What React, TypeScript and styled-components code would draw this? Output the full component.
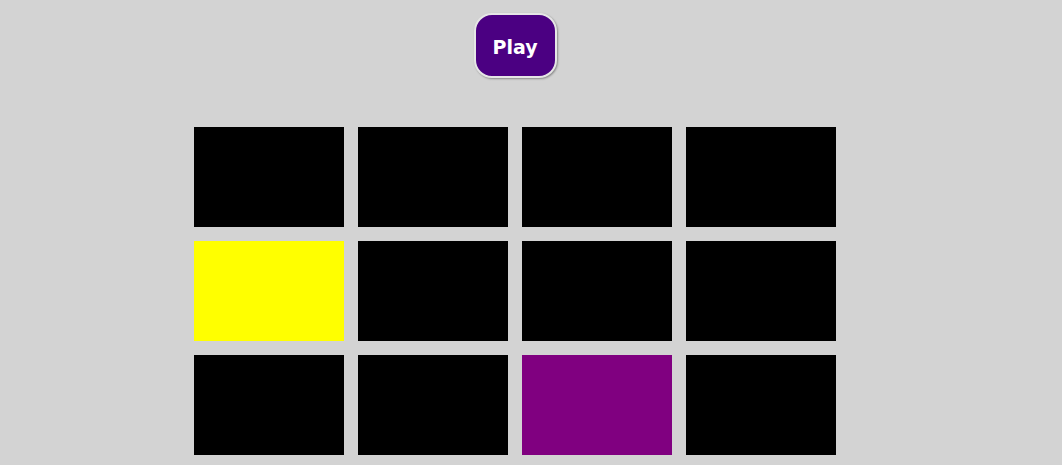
import React from "react";
import styled, { createGlobalStyle } from "styled-components";

const Global = createGlobalStyle`
  html, body { margin: 0; padding: 0; background: #d3d3d3; }
  body { font-family: "DejaVu Sans", Verdana, sans-serif; }
`;

const Page = styled.div`
  width: 1030px;
  display: flex;
  flex-direction: column;
  align-items: center;
`;

const PlayButton = styled.button`
  margin-top: 13px;
  width: 83px;
  height: 65px;
  box-sizing: border-box;
  background: #4b0082;
  color: #ffffff;
  border: 2px solid #e6e6e6;
  border-radius: 18px;
  box-shadow: 1px 1px 2px #8a8a8a;
  font-family: "DejaVu Sans", Verdana, sans-serif;
  font-weight: bold;
  font-size: 19px;
  padding: 2px 0 0 0;
  cursor: pointer;
`;

const Grid = styled.div`
  margin-top: 49px;
  display: grid;
  grid-template-columns: repeat(4, 150px);
  grid-auto-rows: 100px;
  gap: 14px;
`;

const Cell = styled.div<{ $color: string }>`
  background: ${(p) => p.$color};
`;

const colors = [
  "#000", "#000", "#000", "#000",
  "#ffff00", "#000", "#000", "#000",
  "#000", "#000", "#800080", "#000",
];

export default function App() {
  return (
    <>
      <Global />
      <Page>
        <PlayButton>Play</PlayButton>
        <Grid>
          {colors.map((c, i) => (
            <Cell key={i} $color={c} />
          ))}
        </Grid>
      </Page>
    </>
  );
}
